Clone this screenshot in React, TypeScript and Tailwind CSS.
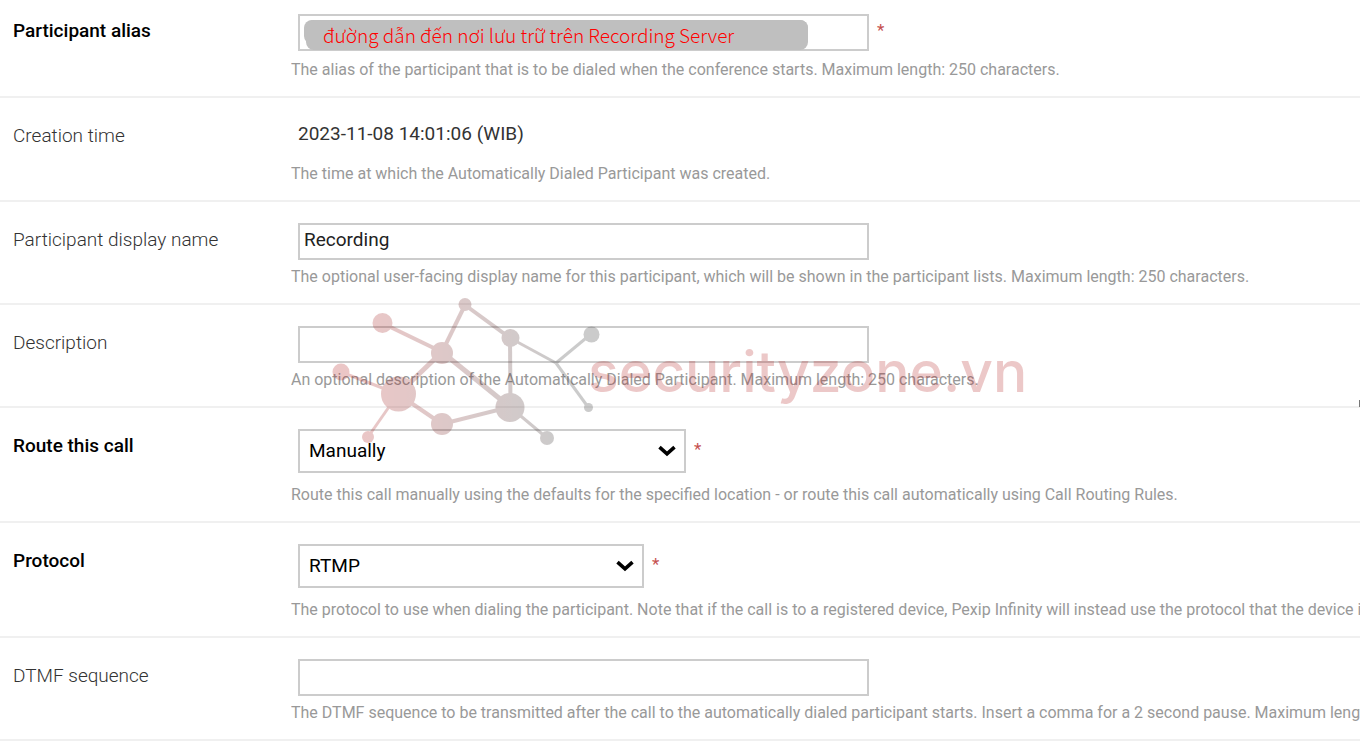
import type { ReactNode } from "react";

const INPUT =
  "h-[37px] w-full max-w-[571px] border-2 border-[#ccc] bg-white px-1 pb-1 text-[19px] leading-6 text-[#222] outline-none";

function Required({ tall }: { tall?: boolean }) {
  return (
    <span className={`text-[17px] leading-6 text-[#c5504f] ${tall ? "pt-2" : "pt-1"}`}>*</span>
  );
}

type RowProps = {
  label: string;
  htmlFor?: string;
  required?: boolean;
  first?: boolean;
  gap: string;
  help: string;
  children: ReactNode;
};

function Row({ label, htmlFor, required, first, gap, help, children }: RowProps) {
  const Tag = htmlFor ? "label" : "span";
  return (
    <div className={`flex border-b-2 border-[#f0f0f0] pl-[13px] pb-[17px] ${first ? "pt-[14px]" : "pt-[21px]"}`}>
      <Tag
        htmlFor={htmlFor}
        className={`w-[278px] shrink-0 pt-[5px] text-[19px] leading-6 ${required ? "font-medium text-black" : "font-light text-[#333]"}`}
      >
        {label}
      </Tag>
      <div className={`flex min-w-0 flex-1 flex-col ${gap}`}>
        <div className="flex items-start gap-2 pl-[7px]">{children}</div>
        <p className="overflow-hidden text-[16px] leading-[18px] whitespace-nowrap text-[#999]">{help}</p>
      </div>
    </div>
  );
}

function Select({ id, options, width }: { id: string; options: string[]; width: string }) {
  return (
    <div className={`relative ${width}`}>
      <select
        id={id}
        className="h-11 w-full appearance-none border-2 border-[#ccc] bg-white px-[9px] text-[19px] leading-6 text-black outline-none"
      >
        {options.map((o) => (
          <option key={o}>{o}</option>
        ))}
      </select>
      <svg
        viewBox="0 0 18 12"
        className="pointer-events-none absolute top-4 right-[10px] h-3 w-[18px]"
        fill="none"
        stroke="#000"
        strokeWidth="3.6"
      >
        <path d="M1.500 2.200 9 8.800 16.500 2.200" />
      </svg>
    </div>
  );
}

const LINKS = [
  [382, 323, 442, 352, 4],
  [465, 305, 442, 352, 4],
  [465, 305, 510, 338, 4],
  [510, 338, 510, 407, 4],
  [442, 352, 510, 407, 5],
  [442, 352, 398, 394, 5],
  [341, 372, 398, 394, 3],
  [398, 394, 368, 437, 3],
  [398, 394, 442, 424, 4],
  [442, 424, 510, 407, 4],
  [510, 407, 547, 438, 3],
  [510, 338, 556, 363, 3],
  [556, 363, 591, 334, 3],
  [556, 363, 588, 407, 3],
] as const;

const NODES = [
  [382.5, 323, 10],
  [465, 304.5, 6.5],
  [442, 353, 11],
  [510.5, 338, 9],
  [591.5, 334.5, 8],
  [341, 372, 8.5],
  [398.5, 394, 17.5],
  [510, 407.5, 14.5],
  [442, 424, 11],
  [368, 437, 6],
  [547, 438, 7],
  [588.5, 407.5, 4.5],
] as const;

function Watermark() {
  return (
    <svg
      viewBox="330 290 280 160"
      className="pointer-events-none absolute top-[290px] left-[330px] h-[160px] w-[280px]"
      aria-hidden="true"
    >
      <defs>
        <linearGradient id="net" gradientUnits="userSpaceOnUse" x1="360" y1="0" x2="560" y2="0">
          <stop offset="0" stopColor="#b22222" />
          <stop offset="1" stopColor="#333333" />
        </linearGradient>
      </defs>
      <g opacity="0.25">
        <g stroke="url(#net)">
          {LINKS.map(([x1, y1, x2, y2, w], i) => (
            <path key={i} d={`M${x1} ${y1}L${x2 === x1 ? x2 + 0.5 : x2} ${y2}`} strokeWidth={w} />
          ))}
        </g>
        <g fill="url(#net)">
          {NODES.map(([cx, cy, r], i) => (
            <circle key={i} cx={cx} cy={cy} r={r} />
          ))}
        </g>
      </g>
    </svg>
  );
}

export default function App() {
  return (
    <main className="relative min-h-screen overflow-x-hidden bg-white font-['Roboto',sans-serif]">
      <form>
        <Row
          label="Participant alias"
          htmlFor="alias"
          required
          first
          gap="gap-[10px]"
          help="The alias of the participant that is to be dialed when the conference starts. Maximum length: 250 characters."
        >
          <div className="relative w-full max-w-[571px]">
            <input id="alias" className={INPUT} />
            <div className="absolute top-[6px] left-[6px] h-6 w-[504px] rounded-lg bg-[#bfbfbf]" />
            <div className="absolute top-[6px] left-2 h-[30px] w-[502px] rounded-lg bg-[#bfbfbf] pl-[17px] font-['Noto_Sans_CJK_SC','Open_Sans',sans-serif] text-[19px] leading-[30px] font-light whitespace-nowrap text-[#f00]">
              đường dẫn đến nơi lưu trữ trên Recording Server
            </div>
          </div>
          <Required />
        </Row>
        <Row
          label="Creation time"
          gap="gap-[15px]"
          help="The time at which the Automatically Dialed Participant was created."
        >
          <span className="pt-[3px] pb-1 text-[19px] leading-6 text-[#333]">2023-11-08 14:01:06 (WIB)</span>
        </Row>
        <Row
          label="Participant display name"
          htmlFor="display"
          gap="gap-2"
          help="The optional user-facing display name for this participant, which will be shown in the participant lists. Maximum length: 250 characters."
        >
          <input id="display" defaultValue="Recording" className={INPUT} />
        </Row>
        <Row
          label="Description"
          htmlFor="description"
          gap="gap-2"
          help="An optional description of the Automatically Dialed Participant. Maximum length: 250 characters."
        >
          <input id="description" className={INPUT} />
        </Row>
        <Row
          label="Route this call"
          htmlFor="route"
          required
          gap="gap-[13px]"
          help="Route this call manually using the defaults for the specified location - or route this call automatically using Call Routing Rules."
        >
          <Select id="route" options={["Manually", "Automatically"]} width="w-[388px]" />
          <Required tall />
        </Row>
        <Row
          label="Protocol"
          htmlFor="protocol"
          required
          gap="gap-[13px]"
          help="The protocol to use when dialing the participant. Note that if the call is to a registered device, Pexip Infinity will instead use the protocol that the device is registered with."
        >
          <Select id="protocol" options={["RTMP", "SIP", "H.323"]} width="w-[346px]" />
          <Required tall />
        </Row>
        <Row
          label="DTMF sequence"
          htmlFor="dtmf"
          gap="gap-2"
          help="The DTMF sequence to be transmitted after the call to the automatically dialed participant starts. Insert a comma for a 2 second pause. Maximum length: 250 characters."
        >
          <input id="dtmf" className={INPUT} />
        </Row>
      </form>
      <Watermark />
      <p
        aria-hidden="true"
        className="pointer-events-none absolute top-[342px] left-[588px] font-['Inter',sans-serif] text-[57px] leading-[60px] font-medium text-[#b22222]/25"
      >
        securityzone.vn
      </p>
      <div className="absolute top-[400px] right-0 h-[7px] w-px bg-[#777]" />
    </main>
  );
}
